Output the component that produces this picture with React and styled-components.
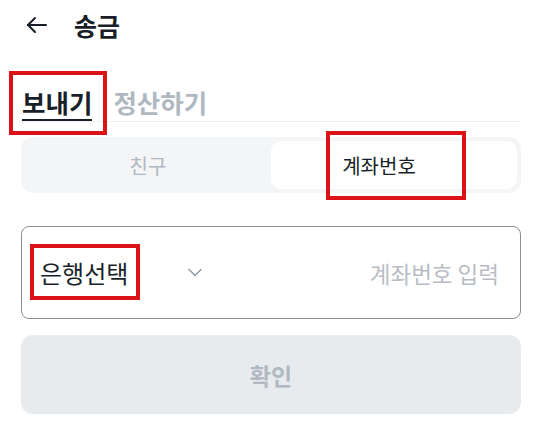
import React, { useState } from 'react';
import styled, { createGlobalStyle } from 'styled-components';

const GlobalStyle = createGlobalStyle`
  body {
    margin: 0;
    background: #fff;
    font-family: "Noto Sans CJK KR", "Noto Sans", sans-serif;
    color: #191f28;
  }
`;

function App() {
  const [mainTab, setMainTab] = useState('send');
  const [target, setTarget] = useState('account');

  return (
    <Page>
      <GlobalStyle />
      <Header>
        <BackButton aria-label="뒤로">
          <svg width="22" height="18" viewBox="0 0 22 18" fill="none" stroke="#191f28" strokeWidth="2" strokeLinecap="round" strokeLinejoin="round">
            <path d="M20 9H2" />
            <path d="M9 2L2 9l7 7" />
          </svg>
        </BackButton>
        <Title>송금</Title>
      </Header>

      <Tabs>
        <Marked $top={-14} $right={-15} $bottom={-14} $left={-12}>
          <Tab $active={mainTab === 'send'} onClick={() => setMainTab('send')}>보내기</Tab>
        </Marked>
        <Tab $active={mainTab === 'settle'} onClick={() => setMainTab('settle')}>정산하기</Tab>
      </Tabs>

      <Segment>
        <SegButton $active={target === 'friend'} onClick={() => setTarget('friend')}>친구</SegButton>
        <SegButton $active={target === 'account'} $shift onClick={() => setTarget('account')}>
          <Marked $top={-20} $right={-50} $bottom={-20} $left={-16}>계좌번호</Marked>
        </SegButton>
      </Segment>

      <InputBox>
        <BankSelect>
          <Marked $top={-11} $right={-12} $bottom={-10} $left={-10}>은행선택</Marked>
          <Chevron width="14" height="9" viewBox="0 0 14 9" fill="none" stroke="#8b95a1" strokeWidth="1.4" strokeLinecap="round" strokeLinejoin="round">
            <path d="M1 1.5l6 6 6-6" />
          </Chevron>
        </BankSelect>
        <AccountInput placeholder="계좌번호 입력" />
      </InputBox>

      <Confirm disabled>확인</Confirm>
    </Page>
  );
}

const Page = styled.div`
  width: 542px;
  padding: 0 21px;
  box-sizing: border-box;
`;

const Header = styled.div`
  height: 50px;
  display: flex;
  align-items: center;
  gap: 26px;
  padding-left: 5px;
`;

const BackButton = styled.button`
  border: none;
  background: none;
  padding: 0;
  display: flex;
  cursor: pointer;
`;

const Title = styled.h1`
  margin: 0;
  font-size: 25px;
  font-weight: 700;
`;

const Tabs = styled.div`
  margin-top: 35px;
  display: flex;
  align-items: flex-end;
  gap: 21px;
  border-bottom: 1px solid #eef0f3;
`;

const Tab = styled.button`
  border: none;
  background: none;
  padding: 0;
  margin-left: ${p => (p.$active ? '1px' : '0')};
  font-family: inherit;
  font-size: 25.5px;
  font-weight: 700;
  line-height: 34px;
  color: ${p => (p.$active ? '#191f28' : '#b0b8c1')};
  border-bottom: 2px solid ${p => (p.$active ? '#191f28' : 'transparent')};
  cursor: pointer;
`;

const Marked = styled.span`
  position: relative;
  display: inline-block;

  &::after {
    content: '';
    position: absolute;
    top: ${p => p.$top}px;
    right: ${p => p.$right}px;
    bottom: ${p => p.$bottom}px;
    left: ${p => p.$left}px;
    border: 4px solid #db1216;
    pointer-events: none;
  }
`;

const Segment = styled.div`
  margin-top: 15px;
  height: 56px;
  padding: 4px;
  box-sizing: border-box;
  display: grid;
  grid-template-columns: 1fr 1fr;
  background: #f4f5f7;
  border-radius: 12px;
`;

const SegButton = styled.button`
  border: none;
  border-radius: 10px;
  padding: 0 ${p => (p.$shift ? '30px' : '0')} 0 0;
  font-family: inherit;
  font-size: 20px;
  font-weight: 400;
  color: ${p => (p.$active ? '#191f28' : '#b0b8c1')};
  background: ${p => (p.$active ? '#fff' : 'transparent')};
  cursor: pointer;
`;

const InputBox = styled.div`
  margin-top: 33px;
  height: 93px;
  box-sizing: border-box;
  border: 1px solid #8f8f8f;
  border-radius: 8px;
  display: flex;
  align-items: center;
  padding: 0 19px 0 18px;
`;

const BankSelect = styled.div`
  display: flex;
  align-items: center;
  gap: 60px;
  font-size: 24px;
  font-weight: 400;
  flex-shrink: 0;
`;

const Chevron = styled.svg`
  display: block;
`;

const AccountInput = styled.input`
  flex: 1;
  min-width: 0;
  border: none;
  outline: none;
  text-align: right;
  font-family: inherit;
  font-size: 22.5px;
  color: #191f28;
  background: transparent;

  &::placeholder {
    color: #b8bdc4;
  }
`;

const Confirm = styled.button`
  margin-top: 16px;
  width: 100%;
  height: 79px;
  border: none;
  border-radius: 12px;
  background: #e8ebee;
  font-family: inherit;
  font-size: 23px;
  font-weight: 700;
  color: #b0b8c1;
`;

export default App;
